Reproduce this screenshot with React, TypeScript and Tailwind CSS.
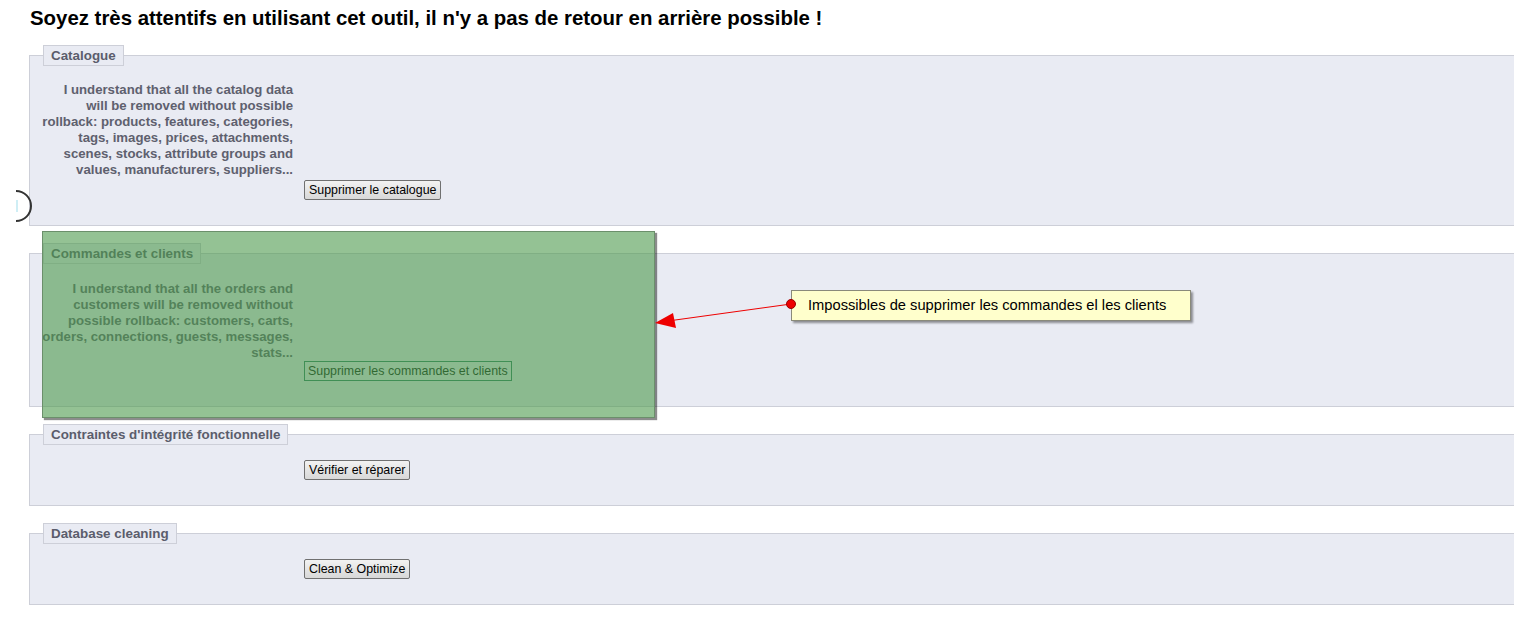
import React from 'react';

type Section = {
  title: string;
  lines?: string[];
  button: string;
  flat?: boolean;
};

const SECTIONS: Section[] = [
  {
    title: 'Catalogue',
    lines: [
      'I understand that all the catalog data',
      'will be removed without possible',
      'rollback: products, features, categories,',
      'tags, images, prices, attachments,',
      'scenes, stocks, attribute groups and',
      'values, manufacturers, suppliers...',
    ],
    button: 'Supprimer le catalogue',
  },
  {
    title: 'Commandes et clients',
    lines: [
      'I understand that all the orders and',
      'customers will be removed without',
      'possible rollback: customers, carts,',
      'orders, connections, guests, messages,',
      'stats...',
    ],
    button: 'Supprimer les commandes et clients',
    flat: true,
  },
  { title: "Contraintes d'intégrité fonctionnelle", button: 'Vérifier et réparer' },
  { title: 'Database cleaning', button: 'Clean & Optimize' },
];

const Panel: React.FC<{ section: Section }> = ({ section }) => (
  <fieldset className="mb-[17px] border border-[#cdcfd8] bg-[#e9ebf3] pb-[25px]">
    <legend className="ml-[13px] border border-[#cdcfd8] bg-[#e9ebf3] px-[7px] py-[2px] text-[13.4px] font-bold leading-[15px] text-[#5b5d6c]">
      {section.title}
    </legend>
    {section.lines && (
      <p
        className={
          section.flat
            ? 'mt-[17px] w-[263px] whitespace-nowrap text-right text-[13.2px] font-bold leading-[16px] text-[#5e606e]'
            : 'mt-[16px] w-[263px] whitespace-nowrap text-right text-[13.2px] font-bold leading-[16px] text-[#5e606e]'
        }
      >
        {section.lines.map((l) => (
          <span key={l} className="block">
            {l}
          </span>
        ))}
      </p>
    )}
    <div
      className={
        section.lines
          ? section.flat
            ? 'ml-[274px] mt-0 flex'
            : 'ml-[274px] mt-[2px] flex'
          : 'ml-[274px] mt-[15px] flex'
      }
    >
      <button
        className={
          section.flat
            ? 'h-[20px] border border-[#2f7f63] bg-transparent px-[3px] text-[12.4px] leading-[16px] text-[#06200a]'
            : 'h-[20px] rounded-[2px] border border-[#707070] bg-gradient-to-b from-[#f2f2f2] to-[#d8d8d8] px-[4px] text-[12.4px] leading-[16px] text-black'
        }
      >
        {section.button}
      </button>
    </div>
  </fieldset>
);

export default function App() {
  return (
    <div className="relative h-[619px] overflow-hidden bg-white font-['Liberation_Sans',Arial,sans-serif]">
      <h2 className="pl-[30px] pt-[6px] text-[20.4px] font-bold leading-[24px] text-black">
        Soyez très attentifs en utilisant cet outil, il n'y a pas de retour en arrière possible !
      </h2>
      <div className="mr-[-20px] mt-[15px] pl-[29px]">
        {SECTIONS.map((s) => (
          <Panel key={s.title} section={s} />
        ))}
      </div>

      {/* loading spinner fragment at the left edge */}
      <svg className="absolute left-0 top-[188px]" width="34" height="36" viewBox="0 0 34 36">
        <path d="M16 3 A15 15 0 0 1 16 33" fill="none" stroke="#333" strokeWidth="2" />
        <line x1="17" y1="12" x2="17" y2="24" stroke="#bfe9f2" strokeWidth="1.5" />
      </svg>

      {/* green highlight over the orders panel */}
      <div className="absolute left-[42px] top-[231px] h-[187px] w-[613px] border border-[#6b8f6b] bg-[#4c9a4c]/60 shadow-[2px_2px_1px_rgba(0,0,0,0.45)]" />

      <div className="absolute left-[791px] top-[290px] flex h-[31px] w-[400px] items-center border border-[#8a8a7a] bg-[#ffffcc] pl-[16px] text-[14.7px] text-black shadow-[2px_2px_2px_rgba(0,0,0,0.4)]">
        Impossibles de supprimer les commandes el les clients
      </div>

      {/* callout arrow */}
      <svg className="absolute left-0 top-0" width="1514" height="619" viewBox="0 0 1514 619">
        <line x1="791" y1="304" x2="668" y2="321" stroke="#e00" strokeWidth="1" />
        <polygon points="655,323 673,313 676,328" fill="#e00" />
        <circle cx="791" cy="304" r="4.5" fill="#e00" stroke="#900" strokeWidth="1" />
      </svg>
    </div>
  );
}
